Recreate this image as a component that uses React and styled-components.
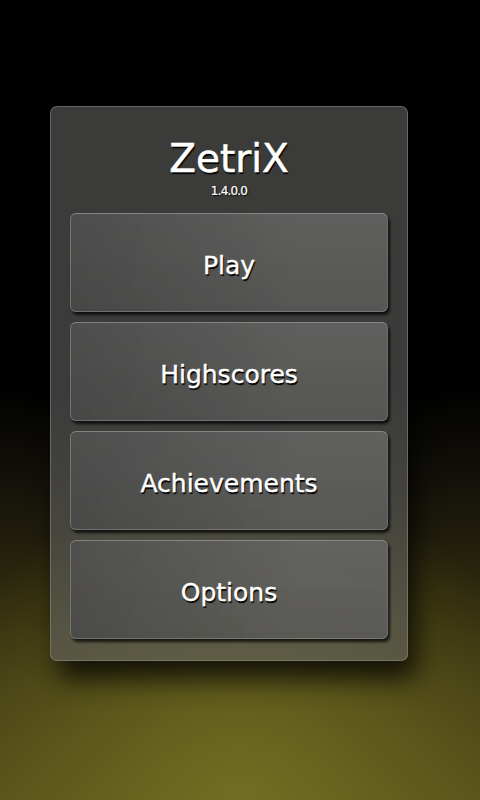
import React from "react";
import styled, { createGlobalStyle } from "styled-components";

const GlobalStyle = createGlobalStyle`
  html, body {
    margin: 0;
    padding: 0;
    background: #000;
  }
  body {
    font-family: "DejaVu Sans", "Open Sans", sans-serif;
  }
`;

const Screen = styled.div`
  width: 480px;
  height: 800px;
  box-sizing: border-box;
  padding: 106px 0 0 50px;
  overflow: hidden;
  background:
    radial-gradient(ellipse 70% 40% at 50% 100%, rgba(120, 116, 36, 0.85) 0%, rgba(120, 116, 36, 0) 100%),
    linear-gradient(180deg, #000 0%, #000 48%, #13110a 60%, #2b270d 73%, #413c13 86%, #524c19 100%);
`;

const Panel = styled.div`
  width: 358px;
  box-sizing: border-box;
  padding: 0 19px 21px;
  border: 1px solid rgba(140, 140, 140, 0.55);
  border-radius: 7px;
  background: rgba(98, 98, 96, 0.6);
  box-shadow: 8px 18px 26px rgba(0, 0, 0, 0.75);
`;

const Header = styled.div`
  height: 106px;
  box-sizing: border-box;
  padding-top: 31px;
  display: flex;
  flex-direction: column;
  align-items: center;
`;

const Title = styled.h1`
  margin: 0;
  font-size: 39px;
  line-height: 41px;
  font-weight: normal;
  color: #fff;
  -webkit-text-stroke: 0.5px #fff;
  text-shadow: 1px 2px 1px #000;
`;

const Version = styled.div`
  margin-top: 4px;
  font-size: 12px;
  line-height: 16px;
  letter-spacing: -0.8px;
  color: #fff;
  -webkit-text-stroke: 0.2px #fff;
  text-shadow: 1px 1px 1px #000;
`;

const Menu = styled.div`
  display: flex;
  flex-direction: column;
  gap: 10px;
`;

const MenuButton = styled.button`
  height: 99px;
  width: 100%;
  box-sizing: border-box;
  padding: 5px 0 0;
  border: 1px solid rgba(150, 150, 150, 0.45);
  border-top-color: rgba(170, 170, 170, 0.6);
  border-radius: 6px;
  background:
    linear-gradient(100deg, rgba(0, 0, 0, 0.18) 0%, rgba(0, 0, 0, 0) 70%),
    linear-gradient(180deg, rgba(255, 255, 255, 0.03) 0%, rgba(0, 0, 0, 0.06) 100%),
    rgba(98, 98, 96, 0.82);
  box-shadow: 2px 3px 3px rgba(0, 0, 0, 0.75);
  font-family: "DejaVu Sans", "Open Sans", sans-serif;
  font-size: 25px;
  color: #fff;
  -webkit-text-stroke: 0.4px #fff;
  text-shadow: 1px 2px 1px #000;
  cursor: pointer;
`;

const items = ["Play", "Highscores", "Achievements", "Options"];

export default function App() {
  return (
    <>
      <GlobalStyle />
      <Screen>
        <Panel>
          <Header>
            <Title>ZetriX</Title>
            <Version>1.4.0.0</Version>
          </Header>
          <Menu>
            {items.map((label) => (
              <MenuButton key={label}>{label}</MenuButton>
            ))}
          </Menu>
        </Panel>
      </Screen>
    </>
  );
}
